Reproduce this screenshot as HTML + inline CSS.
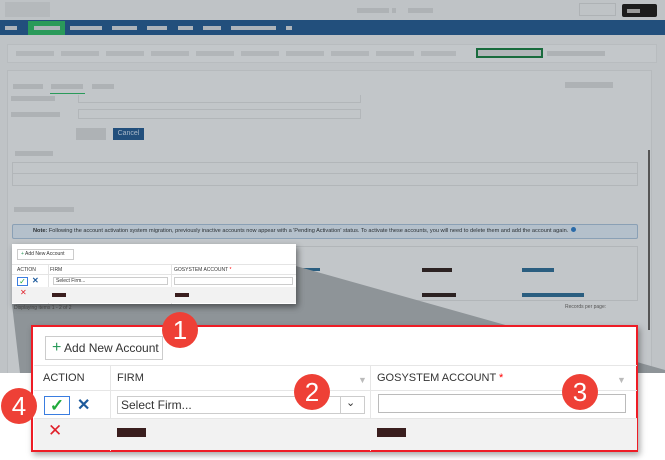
<!DOCTYPE html>
<html><head><style>
*{margin:0;padding:0;box-sizing:border-box}
html,body{width:665px;height:460px;overflow:hidden}
body{background:#bfc3c6;font-family:"Liberation Sans",sans-serif;position:relative}
.a{position:absolute}
.g{background:#aeb2b5}
.badge{position:absolute;width:36px;height:36px;border-radius:50%;background:#ee4036;color:#fff;font-size:26px;text-align:center;line-height:36px;font-family:"Liberation Sans",sans-serif}
</style></head><body>
<div class="a" style="left:5px;top:2px;width:45px;height:15px;background:#b5b9bc"></div>
<div class="a g" style="left:357px;top:8px;width:32px;height:5px"></div>
<div class="a g" style="left:392px;top:8px;width:4px;height:5px"></div>
<div class="a g" style="left:408px;top:8px;width:25px;height:5px"></div>
<div class="a" style="left:579px;top:3px;width:37px;height:13px;border:1px solid #aeb2b5"></div>
<div class="a" style="left:622px;top:4px;width:35px;height:13px;background:#1c1c1c;border-radius:2px"></div>
<div class="a" style="left:627px;top:9px;width:13px;height:4px;background:#999"></div>
<div class="a" style="left:0;top:20px;width:665px;height:15px;background:#224f7c"></div>
<div class="a" style="left:28px;top:21px;width:37px;height:14px;background:#2a9a5a"></div>
<div class="a" style="left:5px;top:26px;width:12px;height:4px;background:#aeb4ba"></div>
<div class="a" style="left:34px;top:26px;width:26px;height:4px;background:#aeb4ba"></div>
<div class="a" style="left:70px;top:26px;width:32px;height:4px;background:#aeb4ba"></div>
<div class="a" style="left:112px;top:26px;width:25px;height:4px;background:#aeb4ba"></div>
<div class="a" style="left:147px;top:26px;width:20px;height:4px;background:#aeb4ba"></div>
<div class="a" style="left:178px;top:26px;width:15px;height:4px;background:#aeb4ba"></div>
<div class="a" style="left:203px;top:26px;width:18px;height:4px;background:#aeb4ba"></div>
<div class="a" style="left:231px;top:26px;width:45px;height:4px;background:#aeb4ba"></div>
<div class="a" style="left:286px;top:26px;width:6px;height:4px;background:#aeb4ba"></div>
<div class="a" style="left:7px;top:44px;width:650px;height:19px;background:#c3c7ca;border:1px solid #b8bcbf"></div>
<div class="a" style="left:16px;top:51px;width:440px;height:5px;background:repeating-linear-gradient(90deg,#b2b6b9 0 38px,transparent 38px 45px)"></div>
<div class="a" style="left:476px;top:48px;width:67px;height:10px;border:2px solid #196b3d;background:#b2b6b9"></div>
<div class="a g" style="left:547px;top:51px;width:58px;height:5px"></div>
<div class="a" style="left:7px;top:70px;width:645px;height:385px;background:#c2c6c9;border:1px solid #b6babd"></div>
<div class="a g" style="left:13px;top:84px;width:30px;height:5px"></div>
<div class="a g" style="left:51px;top:84px;width:32px;height:5px"></div>
<div class="a" style="left:50px;top:93px;width:35px;height:1px;background:#2a9a5a"></div>
<div class="a g" style="left:92px;top:84px;width:22px;height:5px"></div>
<div class="a g" style="left:565px;top:82px;width:48px;height:6px"></div>
<div class="a g" style="left:11px;top:96px;width:44px;height:5px"></div>
<div class="a" style="left:78px;top:95px;width:283px;height:8px;border:1px solid #b2b6b9;border-top:none"></div>
<div class="a g" style="left:11px;top:112px;width:49px;height:5px"></div>
<div class="a" style="left:78px;top:109px;width:283px;height:10px;border:1px solid #b2b6b9"></div>
<div class="a g" style="left:76px;top:128px;width:30px;height:12px"></div>
<div class="a" style="left:113px;top:128px;width:31px;height:12px;background:#224f7c;color:#a9b8c8;font-size:7px;text-align:center;line-height:12px">Cancel</div>
<div class="a g" style="left:15px;top:151px;width:38px;height:5px"></div>
<div class="a" style="left:12px;top:162px;width:626px;height:24px;border:1px solid #b2b6b9"></div>
<div class="a" style="left:12px;top:173px;width:626px;height:1px;background:#b2b6b9"></div>
<div class="a g" style="left:14px;top:207px;width:60px;height:5px"></div>
<div class="a" style="left:648px;top:150px;width:2px;height:180px;background:#555"></div>
<div class="a" style="left:12px;top:224px;width:626px;height:15px;background:#b4c0cb;border:1px solid #8aa0b5;border-radius:2px;font-size:5.6px;line-height:13px;padding-left:20px;color:#2a2f33;white-space:nowrap"><b>Note:</b> Following the account activation system migration, previously inactive accounts now appear with a 'Pending Activation' status. To activate these accounts, you will need to delete them and add the account again.<span style="display:inline-block;width:5px;height:5px;border-radius:50%;background:#2a6aa8;margin-left:3px"></span></div>
<div class="a" style="left:292px;top:246px;width:346px;height:55px;border:1px solid #b2b6b9"></div>
<div class="a" style="left:300px;top:268px;width:20px;height:3px;background:#2a5e80"></div>
<div class="a" style="left:422px;top:268px;width:30px;height:4px;background:#2c2222"></div>
<div class="a" style="left:522px;top:268px;width:32px;height:4px;background:#2a5e80"></div>
<div class="a" style="left:300px;top:293px;width:24px;height:4px;background:#2c2222"></div>
<div class="a" style="left:422px;top:293px;width:34px;height:4px;background:#2c2222"></div>
<div class="a" style="left:522px;top:293px;width:62px;height:4px;background:#2a5e80"></div>
<div class="a" style="left:565px;top:304px;font-size:5px;color:#555">Records per page:</div>
<div class="a" style="left:305px;top:303px;font-size:6px;color:#666">K &lt; <span style="background:#2a9a5a;color:#123;padding:0 1px">1</span> &gt; K</div>
<svg class="a" style="left:0;top:0;display:block" width="665" height="460"><polygon points="232,248 665,370 665,373 20,373 12,304 296,304 296,248" fill="#8e9498"/><rect x="0" y="373" width="665" height="87" fill="#fff"/></svg>
<div class="a" style="left:12px;top:244px;width:284px;height:60px;background:#fff;box-shadow:2px 3px 6px rgba(0,0,0,.45);font-size:5px;color:#333">
 <div class="a" style="left:5px;top:5px;width:57px;height:11px;border:1px solid #ccc;line-height:9px;padding-left:3px"><span style="color:#2a9a5a">+</span> Add New Account</div>
 <div class="a" style="left:0;top:20px;width:284px;height:1px;background:#e4e4e4"></div>
 <div class="a" style="left:5px;top:23px">ACTION</div>
 <div class="a" style="left:38px;top:23px">FIRM</div>
 <div class="a" style="left:162px;top:23px">GOSYSTEM ACCOUNT <span style="color:red">*</span></div>
 <div class="a" style="left:36px;top:20px;width:1px;height:40px;background:#e4e4e4"></div>
 <div class="a" style="left:159px;top:20px;width:1px;height:40px;background:#e4e4e4"></div>
 <div class="a" style="left:0;top:30px;width:284px;height:1px;background:#e4e4e4"></div>
 <div class="a" style="left:5px;top:33px;width:11px;height:9px;border:1px solid #3a7de0;color:#1faa3a;font-size:8px;line-height:8px;text-align:center">✓</div>
 <div class="a" style="left:20px;top:32px;color:#1d5a9c;font-size:8px;font-weight:bold">✕</div>
 <div class="a" style="left:41px;top:33px;width:115px;height:8px;border:1px solid #ccc;line-height:6px;padding-left:2px">Select Firm...</div>
 <div class="a" style="left:162px;top:33px;width:119px;height:8px;border:1px solid #ccc"></div>
 <div class="a" style="left:0;top:43px;width:284px;height:16px;background:#f2f2f2"></div>
 <div class="a" style="left:8px;top:44px;color:#e0202a;font-size:8px">✕</div>
 <div class="a" style="left:40px;top:49px;width:14px;height:4px;background:#3a1e1e"></div>
 <div class="a" style="left:163px;top:49px;width:14px;height:4px;background:#3a1e1e"></div>
</div>
<div class="a" style="left:14px;top:305px;font-size:5px;color:#444">Displaying items 1 - 2 of 2</div>
<div class="a" style="left:31px;top:325px;width:607px;height:127px;background:#fff;border:2px solid #ee1c25;box-shadow:2px 3px 6px rgba(0,0,0,.35);font-size:11px;color:#333">
 <div class="a" style="left:12px;top:9px;width:118px;height:24px;border:1px solid #ccc;line-height:22px;padding-left:6px;font-size:12px"><span style="color:#2a9a5a;font-size:16px">+</span> Add New Account</div>
 <div class="a" style="left:1px;top:38px;width:603px;height:1px;background:#e6e6e6"></div>
 <div class="a" style="left:10px;top:45px">ACTION</div>
 <div class="a" style="left:84px;top:45px">FIRM</div>
 <div class="a" style="left:344px;top:45px">GOSYSTEM ACCOUNT <span style="color:red">*</span></div>
 <div class="a" style="left:325px;top:48px;color:#bbb;font-size:9px">▼</div>
 <div class="a" style="left:584px;top:48px;color:#bbb;font-size:9px">▼</div>
 <div class="a" style="left:77px;top:38px;width:1px;height:86px;background:#e6e6e6"></div>
 <div class="a" style="left:337px;top:38px;width:1px;height:86px;background:#e6e6e6"></div>
 <div class="a" style="left:1px;top:63px;width:603px;height:1px;background:#e6e6e6"></div>
 <div class="a" style="left:11px;top:69px;width:26px;height:19px;border:1px solid #3a7de0;color:#1faa3a;font-size:17px;line-height:17px;text-align:center;font-weight:bold">✓</div>
 <div class="a" style="left:44px;top:68px;color:#1d5a9c;font-size:16px;font-weight:bold">✕</div>
 <div class="a" style="left:84px;top:69px;width:248px;height:18px;border:1px solid #ccc;line-height:16px;padding-left:3px;font-size:12px">Select Firm...</div>
 <div class="a" style="left:307px;top:69px;width:1px;height:18px;background:#ccc"></div>
 <div class="a" style="left:313px;top:69px;font-size:11px">⌄</div>
 <div class="a" style="left:345px;top:67px;width:248px;height:19px;border:1px solid #bbb"></div>
 <div class="a" style="left:1px;top:91px;width:603px;height:32px;background:#f2f2f2;border-top:1px solid #e6e6e6"></div>
 <div class="a" style="left:15px;top:94px;color:#e0202a;font-size:17px">✕</div>
 <div class="a" style="left:84px;top:101px;width:29px;height:9px;background:#3a1e1e"></div>
 <div class="a" style="left:344px;top:101px;width:29px;height:9px;background:#3a1e1e"></div>
</div>
<div class="badge" style="left:162px;top:312px">1</div>
<div class="badge" style="left:294px;top:374px">2</div>
<div class="badge" style="left:562px;top:374px">3</div>
<div class="badge" style="left:1px;top:388px">4</div>
</body></html>
